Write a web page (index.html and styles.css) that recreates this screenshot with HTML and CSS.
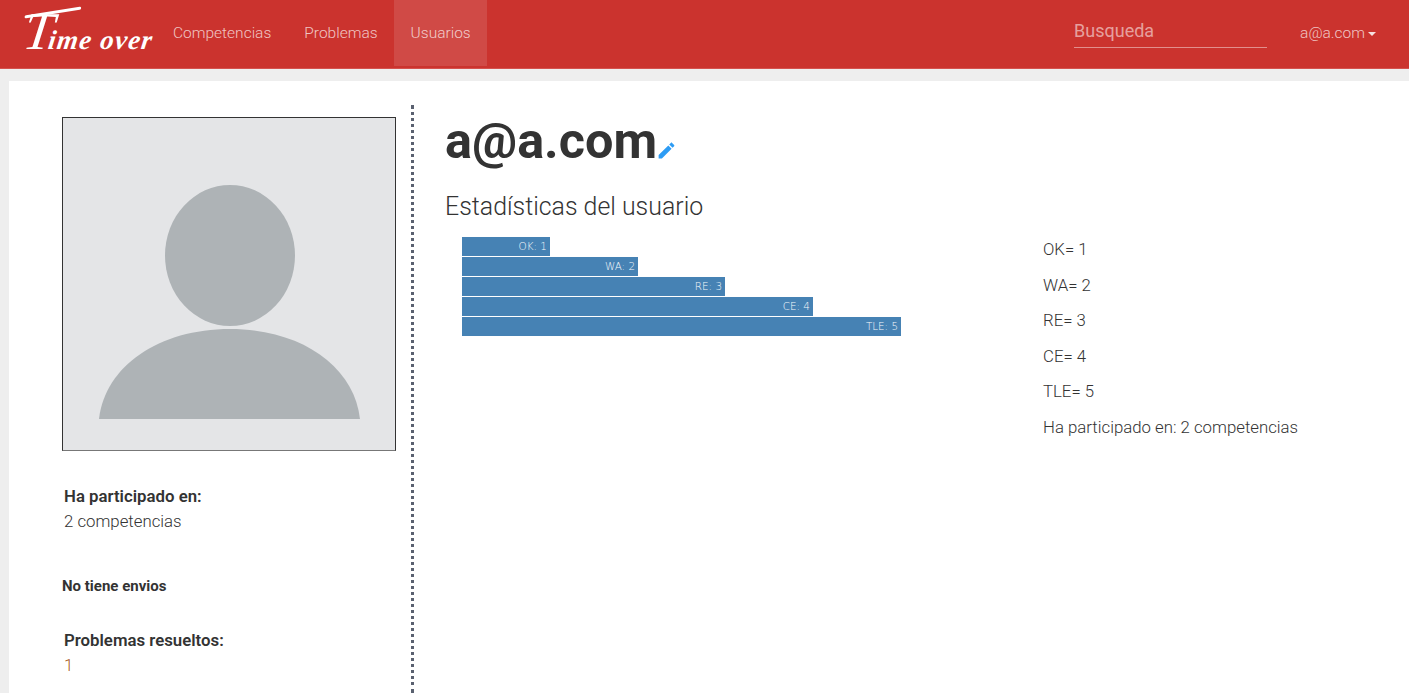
FILE: index.html
```html
<!DOCTYPE html>
<html lang="es">
<head>
<meta charset="utf-8">
<title>Time over</title>
<link rel="stylesheet" href="styles.css">
</head>
<body>
<nav class="navbar">
  <a class="brand" href="#"><span class="logo">Time over</span><span class="logo-bar"></span></a>
  <ul class="nav-links">
    <li><a href="#">Competencias</a></li>
    <li><a href="#">Problemas</a></li>
    <li><a class="active" href="#">Usuarios</a></li>
  </ul>
  <div class="search">Busqueda</div>
  <a class="user" href="#">a@a.com<span class="caret"></span></a>
</nav>
<main class="card">
  <aside class="side">
    <div class="photo">
      <svg viewBox="0 0 332 332" width="332" height="332" aria-hidden="true">
        <ellipse cx="167" cy="137.5" rx="65" ry="70.5" fill="#aeb3b6"/>
        <path d="M36 301C42 248 96 211 167 211C238 211 291 248 297 301Z" fill="#aeb3b6"/>
      </svg>
    </div>
    <div class="fact first">
      <strong>Ha participado en:</strong>
      <span>2 competencias</span>
    </div>
    <p class="none">No tiene envios</p>
    <div class="fact">
      <strong>Problemas resueltos:</strong>
      <span class="solved">1</span>
    </div>
  </aside>
  <section class="content">
    <h1>a@a.com<svg class="pencil" viewBox="0 0 24 24" width="21" height="21" aria-hidden="true"><path d="M3 17.25V21h3.75L17.81 9.94l-3.75-3.75L3 17.25zM20.71 7.04c.39-.39.39-1.02 0-1.41l-2.34-2.34c-.39-.39-1.02-.39-1.41 0l-1.83 1.83 3.75 3.75 1.83-1.83z"/></svg></h1>
    <h2>Estadísticas del usuario</h2>
    <div class="stats">
      <div class="chart">
        <div class="bar w1">OK: 1</div>
        <div class="bar w2">WA: 2</div>
        <div class="bar w3">RE: 3</div>
        <div class="bar w4">CE: 4</div>
        <div class="bar w5">TLE: 5</div>
      </div>
      <ul class="numbers">
        <li>OK= 1</li>
        <li>WA= 2</li>
        <li>RE= 3</li>
        <li>CE= 4</li>
        <li>TLE= 5</li>
        <li>Ha participado en: 2 competencias</li>
      </ul>
    </div>
  </section>
</main>
</body>
</html>
```
FILE: styles.css
```css
* { box-sizing: border-box; }
html, body { height: 100%; }
body {
  margin: 0;
  height: 693px;
  overflow: hidden;
  display: flex;
  flex-direction: column;
  background: #eeeeee;
  color: #333333;
  font-family: Roboto, "Liberation Sans", sans-serif;
  font-size: 16.8px;
  font-weight: 300;
}
a { color: inherit; text-decoration: none; }
ul { list-style: none; margin: 0; padding: 0; }

.navbar {
  flex: none;
  height: 69px;
  display: flex;
  background: #cb332e;
  border-bottom: 1px solid #d4524e;
  color: rgba(255, 255, 255, 0.72);
  font-size: 15.5px;
  padding-left: 20px;
}
.brand {
  position: relative;
  display: block;
  flex: none;
  width: 136.5px;
  height: 66px;
  color: #ffffff;
  transform: skewX(-8deg);
}
.logo {
  display: block;
  padding-left: 4px;
  font-family: "Liberation Serif", serif;
  font-style: italic;
  font-weight: 700;
  font-size: 27px;
  line-height: 62px;
  letter-spacing: 1.2px;
  white-space: nowrap;
}
.logo::first-letter {
  font-size: 53px;
  font-weight: 400;
  letter-spacing: -4px;
}
.logo-bar {
  position: absolute;
  left: 2px;
  top: 11px;
  width: 56px;
  height: 3px;
  border-radius: 2px;
  background: #ffffff;
  transform: rotate(-9deg);
}
.nav-links { display: flex; height: 66px; margin-right: auto; }
.nav-links a {
  display: block;
  height: 66px;
  padding: 0 16.5px;
  line-height: 66px;
}
.nav-links a.active { background: #d04a46; }
.search {
  width: 193px;
  height: 48px;
  padding-top: 20px;
  border-bottom: 1px solid rgba(255, 255, 255, 0.45);
  color: rgba(255, 255, 255, 0.55);
  font-size: 18px;
  font-weight: 400;
  line-height: 22px;
}
.user {
  display: flex;
  align-items: center;
  height: 66px;
  margin-left: 33px;
  margin-right: 33px;
}
.caret {
  width: 0;
  height: 0;
  margin-left: 3px;
  margin-top: 1px;
  border-left: 4px solid transparent;
  border-right: 4px solid transparent;
  border-top: 4px solid rgba(255, 255, 255, 0.85);
}

.card {
  flex: 1;
  min-height: 0;
  display: flex;
  margin: 12px 0 0 9px;
  padding-top: 24px;
  background: #ffffff;
}
.side {
  flex: none;
  width: 405px;
  padding: 12px 0 0 53px;
  border-right: 3px dotted #5a6170;
}
.photo {
  width: 334px;
  height: 334px;
  border: 1px solid #333333;
  border-bottom-color: #777777;
  background: #e4e5e7;
}
.photo svg { display: block; }
.fact { margin-left: 2px; }
.fact strong, .fact span { display: block; line-height: 25px; }
.fact strong { font-weight: 600; }
.fact.first { margin-top: 33px; }
.none {
  margin: 41.5px 0 32.5px;
  font-size: 15px;
  font-weight: 700;
  line-height: 20px;
}
.solved { color: #a85a1e; }

.content { flex: 1; min-width: 0; padding-left: 31px; }
h1 {
  margin: 0;
  height: 72px;
  font-size: 50.4px;
  font-weight: 700;
  line-height: 72px;
  white-space: nowrap;
}
.pencil { fill: #2d9cf4; vertical-align: -3px; margin-left: -1px; }
h2 {
  margin: 15px 0 0;
  font-size: 24.9px;
  font-weight: 300;
  line-height: 30px;
}
.stats { display: flex; margin-top: 15px; }
.chart {
  flex: none;
  width: 598px;
  padding-left: 17px;
}
.bar {
  height: 19px;
  margin-bottom: 1px;
  padding-right: 3px;
  background: #4682b4;
  color: #f4f8fb;
  font-family: "DejaVu Sans", sans-serif;
  font-size: 10.4px;
  line-height: 19px;
  text-align: right;
  white-space: nowrap;
}
.w1 { width: 88px; }
.w2 { width: 176px; }
.w3 { width: 263px; }
.w4 { width: 351px; }
.w5 { width: 439px; }
.numbers li { height: 35.5px; line-height: 24px; }
```
